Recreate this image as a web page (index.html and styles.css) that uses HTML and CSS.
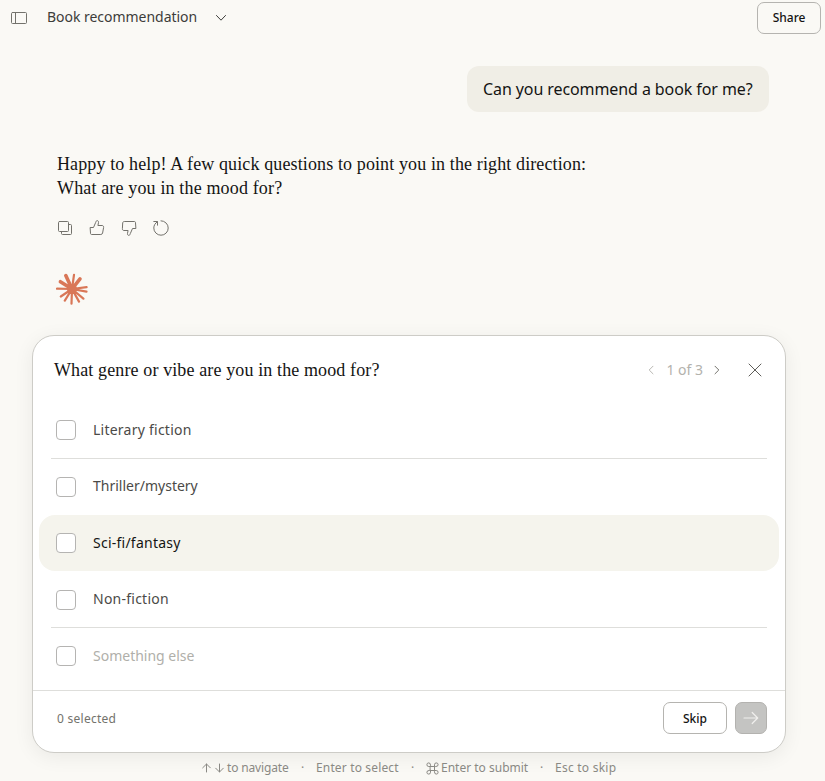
FILE: index.html
```
<!DOCTYPE html>
<html lang="en">
<head>
<meta charset="utf-8">
<title>Book recommendation</title>
<link rel="stylesheet" href="styles.css">
</head>
<body>
<header class="topbar">
  <svg class="icon sidebar-icon" viewBox="0 0 16 12" width="16" height="12"><rect x=".5" y=".5" width="15" height="11" rx="1"/><path d="M4.500 .5v11"/></svg>
  <span class="title">Book recommendation</span>
  <svg class="icon chevron" viewBox="0 0 12 8" width="12" height="8"><path d="M1.500 1.500 6 6.200 10.500 1.500"/></svg>
  <button class="btn share">Share</button>
</header>
<main class="chat">
  <div class="bubble">Can you recommend a book for me?</div>
  <div class="answer">
    <p>Happy to help! A few quick questions to point you in the right direction:</p>
    <p class="follow-up">What are you in the mood for?</p>
  </div>
  <div class="actions">
    <svg class="icon" viewBox="0 0 16 16" width="16" height="16"><rect x="1.500" y="1.500" width="10" height="10" rx="1"/><path d="M11.500 4.500h2a1 1 0 0 1 1 1v8a1 1 0 0 1-1 1h-8a1 1 0 0 1-1-1v-2"/></svg>
    <svg class="icon" viewBox="0 0 16 16" width="16" height="16"><path d="M1.500 7.500h3L6.700 2.400C7.100 1.200 7.400.6 8.100.6c1.100 0 1.600.9 1.400 2L8.900 5.500h4.200c1.200 0 1.700 1 1.500 2l-1 5.500c-.3 1-.9 1.500-1.800 1.500H2.500c-.6 0-1-.4-1-1z"/></svg>
    <svg class="icon" viewBox="0 0 16 16" width="16" height="16"><path d="M14.500 8.500h-3L9.300 13.600c-.4 1.200-.7 1.800-1.400 1.800-1.100 0-1.600-.9-1.400-2L7.100 10.500H2.900c-1.200 0-1.700-1-1.500-2l.3-5.500c.1-1 .7-1.500 1.600-1.500h10.200c.6 0 1 .4 1 1z"/></svg>
    <svg class="icon" viewBox="0 0 16 16" width="16" height="16"><path d="M.8 1.500h3.700v3.700M4.400 1.800C2.200 3 .8 5.400.8 8a7.200 7.200 0 1 0 7.200-7.200"/></svg>
  </div>
  <svg class="spark" viewBox="-16 -16 32 32" width="32" height="32">
    <path class="ray-wide" d="M0 0-6.200-13.400M0 0 8-10.200M0 0-11.600-7.300"/>
    <path class="ray" d="M0 0 2-14.200M0 0 14.600-1.900M0 0 14.500 2.600M0 0 11.400 9.700M0 0 7 12.600M0 0-.5 14.600M0 0-7.200 11.600M0 0-11.200 7.500M0 0-15-.3"/>
    <circle r="5"/>
  </svg>
</main>
<section class="card">
  <div class="card-head">
    <h2>What genre or vibe are you in the mood for?</h2>
    <div class="pager">
      <svg class="icon prev" viewBox="0 0 6 10" width="6" height="10"><path d="M5 1.200 1.200 5 5 8.800"/></svg>
      <span>1 of 3</span>
      <svg class="icon" viewBox="0 0 6 10" width="6" height="10"><path d="M1 1.200 4.800 5 1 8.800"/></svg>
    </div>
    <svg class="icon close" viewBox="0 0 14 14" width="14" height="14"><path d="M1 1 13 13M13 1 1 13"/></svg>
  </div>
  <div class="options">
    <label class="option lined"><i class="box"></i><span class="wide">Literary fiction</span></label>
    <label class="option second"><i class="box"></i><span>Thriller/mystery</span></label>
    <label class="option active"><i class="box"></i><span class="wide">Sci-fi/fantasy</span></label>
    <label class="option lined fourth"><i class="box"></i><span class="wide">Non-fiction</span></label>
    <label class="option other"><i class="box"></i><span>Something else</span></label>
  </div>
  <div class="card-foot">
    <span class="count">0 selected</span>
    <button class="btn">Skip</button>
    <button class="btn submit"><svg viewBox="0 0 16 14" width="16" height="14"><path d="M1 7H14.500M9.200 1.500 14.700 7 9.200 12.500"/></svg></button>
  </div>
</section>
<footer class="hints">
  <svg class="icon" viewBox="0 0 23 10" width="23" height="10"><path d="M4.500 9V1M.7 4.800 4.500 1 8.300 4.800M17.500 1V9M13.700 5.200 17.500 9 21.300 5.200"/></svg>
  <span class="navigate">to navigate</span><b>·</b>
  <span class="select">Enter to select</span><b>·</b>
  <svg class="icon cmd" viewBox="0 0 13 13" width="13" height="13"><path d="M4.500 4.500h4v4h-4zM4.500 4.500h-1.700a1.800 1.800 0 1 1 1.700-1.700zM8.500 4.500V2.800a1.800 1.800 0 1 1 1.700 1.700zM8.500 8.500h1.700a1.800 1.800 0 1 1-1.700 1.700zM4.500 8.500v1.700a1.800 1.800 0 1 1-1.700-1.700z"/></svg>
  <span class="enter">Enter to submit</span><b>·</b>
  <span class="esc">Esc to skip</span>
</footer>
</body>
</html>
```
FILE: styles.css
```
* { box-sizing: border-box; }
body {
  margin: 0;
  height: 781px;
  overflow: hidden;
  background: #faf9f5;
  color: #141413;
  font-family: "Noto Sans", sans-serif;
}
svg { display: block; flex: none; }
.icon { fill: none; stroke: #73726c; stroke-linecap: round; stroke-linejoin: round; }

.topbar { display: flex; align-items: center; height: 36px; padding: 0 4px 0 11px; }
.title { width: 150px; margin-left: 20px; padding-bottom: 2px; font-size: 14px; line-height: 20px; letter-spacing: -.03px; white-space: nowrap; color: #3d3d3a; }
.chevron { margin-left: 18px; stroke: #3d3d3a; }
.btn {
  width: 64px;
  height: 32px;
  padding: 0;
  border: 1px solid #b5b4b0;
  border-radius: 7px;
  background: transparent;
  color: #141413;
  font: 500 12px/16px "Noto Sans", sans-serif;
}
.share { margin-left: auto; }

.chat { display: flex; flex-direction: column; height: 299px; padding: 30px 56px 0; }
.bubble {
  align-self: flex-end;
  width: 302px;
  height: 46px;
  padding: 0 16px;
  border-radius: 12px;
  background: #f0eee6;
  font-size: 16px;
  line-height: 46px;
  letter-spacing: -.09px;
  white-space: nowrap;
}
.answer { margin: 40px 0 0 1px; font: 18px/24px "Liberation Serif", serif; letter-spacing: .12px; }
.answer p { margin: 0; }
.answer .follow-up { letter-spacing: .15px; }
.actions { display: flex; gap: 16px; margin: 20px 0 0 1px; }
.spark { margin-top: 37px; fill: #d97757; stroke: #d97757; stroke-linecap: round; }
.spark circle { stroke: none; }
.ray { stroke-width: 2.200; }
.ray-wide { stroke-width: 3.600; }

.card {
  width: 754px;
  height: 418px;
  margin-left: 32px;
  border: 1px solid #cdccc7;
  border-radius: 22px;
  background: #fff;
  box-shadow: 0 4px 20px rgba(0, 0, 0, .065);
}
.card-head { display: flex; align-items: center; height: 66px; padding: 2px 23px 0 21px; }
h2 { margin: 0; font: 18px/24px "Liberation Serif", serif; letter-spacing: .12px; }
.pager { display: flex; align-items: center; gap: 12px; margin-left: auto; font-size: 14px; line-height: 20px; color: #b3b2ad; }
.pager span { margin-right: -1px; }
.pager .prev { stroke: #b8b7b2; }
.close { margin-left: 28px; stroke: #5e5d59; }
.options { display: grid; grid-template-rows: 57px 56px 56px 57px 62px; padding: 0 6px; }
.option { display: flex; align-items: center; margin: 0 12px; padding-left: 5px; font-size: 14px; line-height: 20px; color: #4b4a47; }
.lined { border-bottom: 1px solid #dededb; }
.option.active { margin: 0; padding-left: 17px; border-radius: 16px; background: #f5f4ed; color: #141413; }
.option.other { padding-bottom: 6px; color: #b0afaa; }
.option .wide { letter-spacing: .24px; }
.second span { margin-bottom: 2px; }
.box { width: 20px; height: 20px; margin-right: 17px; border: 1px solid #b5b4b2; border-radius: 4px; background: #fff; }
.fourth .box { margin-top: 2px; }
.card-foot { display: flex; align-items: center; gap: 8px; height: 62px; padding: 0 18px 8px 24px; border-top: 1px solid #dededb; }
.count { margin-right: auto; padding-top: 1px; font-size: 12px; letter-spacing: .26px; color: #73726c; }
.card-foot .btn { padding-top: 2px; }
.card-foot .submit { display: flex; align-items: center; justify-content: center; width: 32px; padding: 0; border-color: #b3b2af; background: #c4c4c2; }
.submit svg { fill: none; stroke: #f0efed; stroke-width: 1.200; stroke-linecap: round; stroke-linejoin: round; }

.hints { display: flex; align-items: center; height: 28px; padding: 2px 0 0 202px; font-size: 12px; line-height: 16px; color: #8a8984; white-space: nowrap; }
.hints .icon { stroke: #8a8984; }
.hints b { width: 27px; text-align: center; font-weight: 400; }
.navigate { width: 62px; margin-left: 2px; letter-spacing: -.15px; }
.select { width: 83px; letter-spacing: .15px; }
.cmd { margin-right: 2px; }
.enter { width: 87px; }
.esc { letter-spacing: .24px; }
```
